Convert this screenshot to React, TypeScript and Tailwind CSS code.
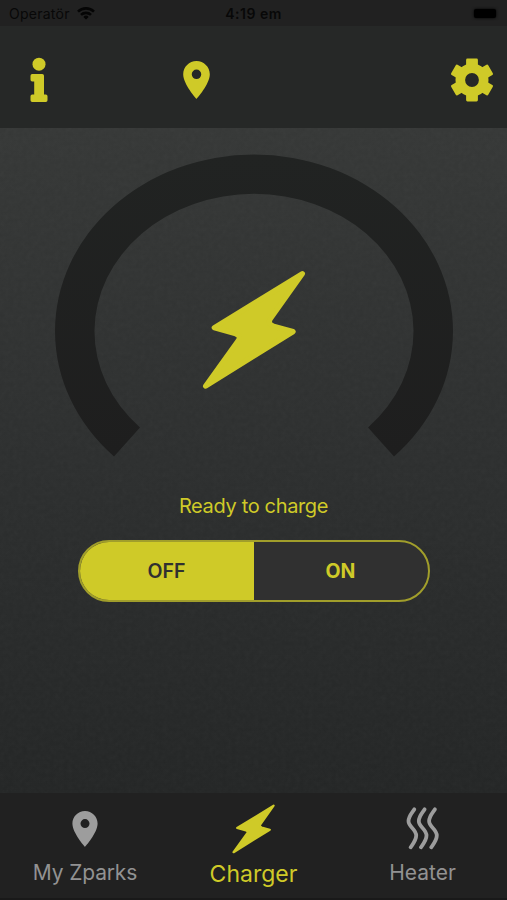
import React, { useState } from "react";

const Bolt: React.FC<{ className?: string }> = ({ className }) => (
  <svg viewBox="0 0 390 420" className={className} fill="currentColor">
    <path
      d="M337 41 L73 203 L137 221 Q154 228 145 242 L47 378 L309 215 L251 199 Q233 192 240 178 Z"
      stroke="currentColor"
      strokeWidth="16"
      strokeLinejoin="round"
    />
  </svg>
);

const Pin: React.FC<{ className?: string }> = ({ className }) => (
  <svg viewBox="5 2 14 20" className={className} fill="currentColor">
    <path d="M12 2C8.13 2 5 5.13 5 9c0 5.25 7 13 7 13s7-7.75 7-13c0-3.87-3.13-7-7-7zm0 9.5a2.5 2.5 0 1 1 0-5 2.5 2.5 0 0 1 0 5z" />
  </svg>
);

const Info = () => (
  <svg viewBox="0 0 18 46" className="h-[46px] w-[18px]" fill="currentColor">
    <circle cx="9" cy="7.2" r="6.5" />
    <path d="M2 17H12.200Q14 17 14 18.800V37.500H15.800Q17.500 37.500 17.500 39.200V43.300Q17.500 45 15.800 45H2.200Q.5 45 .5 43.300V39.200Q.5 37.500 2.200 37.500H4.200V24.500H2.200Q.5 24.500 .5 22.800V18.700Q.5 17 2.200 17z" />
  </svg>
);

const Wifi = () => (
  <svg viewBox="0 0 18 13" className="h-[13px] w-[18px]" fill="none" stroke="#050505" strokeWidth="2.6">
    <path d="M1 4.600a11.500 11.500 0 0 1 16 0" />
    <path d="M4 7.900a7.200 7.200 0 0 1 10 0" />
    <path d="M9 12.600 6.300 9.900a3.900 3.900 0 0 1 5.400 0z" fill="#050505" stroke="none" />
  </svg>
);

// One tooth on the hub, repeated six times
const Gear = () => (
  <svg viewBox="-22 -22 44 44" className="h-11 w-11" fill="currentColor">
    <path
      fillRule="evenodd"
      d="M0-16.500a16.500 16.500 0 1 0 0 33a16.500 16.500 0 1 0 0-33zM0-6.900a6.900 6.900 0 1 1 0 13.800a6.900 6.900 0 1 1 0-13.800z"
    />
    {[0, 60, 120, 180, 240, 300].map((angle) => (
      <rect key={angle} x="-5.9" y="-21.4" width="11.8" height="11" rx="1.3" transform={`rotate(${angle})`} />
    ))}
  </svg>
);

const Heat = () => (
  <svg viewBox="0 0 34 44" className="h-11 w-[34px]" fill="none" stroke="currentColor" strokeWidth="3.8" strokeLinecap="round">
    {[0, 10.3, 20.6].map((x) => (
      <path key={x} transform={`translate(${x} 0)`} d="M8.300 3.300C5 8 2.500 10.500 2.500 15C2.500 21 10.200 23 10.200 29.500C10.200 34 8 36.500 4.600 41.300" />
    ))}
  </svg>
);

const Gauge = () => (
  <svg viewBox="0 0 400 304" className="h-[304px] w-[400px]">
    <defs>
      <linearGradient id="ring" x1="0" y1="0" x2="0" y2="1">
        <stop offset="0" stopColor="#212322" />
        <stop offset="1" stopColor="#1e1e1e" />
      </linearGradient>
    </defs>
    <path
      d="M60 302.500 A199 176.500 0 1 1 340 302.500 L314 273.500 A159.500 137.500 0 1 0 86 273.500 Z"
      fill="url(#ring)"
    />
  </svg>
);

const Grain = () => (
  <svg className="pointer-events-none absolute inset-0 h-full w-full opacity-[0.03]">
    <filter id="grain">
      <feTurbulence type="fractalNoise" baseFrequency="0.22" numOctaves="3" />
      <feColorMatrix type="saturate" values="0" />
    </filter>
    <rect width="100%" height="100%" filter="url(#grain)" />
  </svg>
);

const App: React.FC = () => {
  const [charging, setCharging] = useState(false);

  return (
    <div className="flex h-[900px] w-[507px] flex-col overflow-hidden bg-[#212121] font-['Inter',sans-serif] text-[#cfca28]">
      <div className="grid h-[26px] shrink-0 grid-cols-3 items-center px-[9px] text-[14px] text-[#080808]">
        <div className="flex items-center gap-[7px]">
          <span className="tracking-[0.25px]">Operatör</span>
          <Wifi />
        </div>
        <span className="text-center font-semibold tracking-[0.5px]">4:19 em</span>
        <div className="mr-[2px] h-[9px] w-[22px] justify-self-end rounded-[2px] bg-black shadow-[0_0_3px_#000]" />
      </div>

      <header className="flex h-[102px] shrink-0 items-center bg-[#262827]">
        <div className="ml-[29.500px] mt-[6px]">
          <Info />
        </div>
        <Pin className="ml-[135.500px] mt-[5px] h-[38px] w-[27px]" />
        <div className="ml-auto mr-[13.500px] mt-[6px]">
          <Gear />
        </div>
      </header>

      <main className="relative flex h-[665px] shrink-0 flex-col items-center bg-linear-to-b from-[#363837] via-[#2d2f2f] to-[#242626]">
        <Grain />
        <div className="relative mt-[26px] grid place-items-center">
          <div className="col-start-1 row-start-1">
            <Gauge />
          </div>
          <Bolt className="col-start-1 row-start-1 mb-[-48px] h-[140px] w-[130px] translate-x-px" />
        </div>
        <p className="relative mt-[35px] text-[20px] leading-[26px] tracking-[-0.35px]">Ready to charge</p>
        <div className="relative mt-[21px] grid h-[62px] w-[352px] grid-cols-2 overflow-hidden rounded-full border-2 border-[#a19e2b] bg-[#303030] text-[19.5px] font-semibold">
          <button
            onClick={() => setCharging(false)}
            className={charging ? "pt-px" : "bg-[#cfca28] pt-px text-[#303030]"}
          >
            OFF
          </button>
          <button
            onClick={() => setCharging(true)}
            className={charging ? "bg-[#cfca28] pt-px font-bold text-[#303030]" : "pt-px font-bold"}
          >
            ON
          </button>
        </div>
      </main>

      <nav className="grid h-[107px] shrink-0 grid-cols-3 border-b-2 border-[#191919] text-[#929292]">
        <div className="flex flex-col items-center">
          <Pin className="ml-px mt-[18px] h-[36px] w-[26px] text-[#9d9d9d]" />
          <span className="ml-px mt-[13px] text-[21px] leading-[26px] tracking-[-0.15px]">My Zparks</span>
        </div>
        <div className="flex flex-col items-center text-[#cfca28]">
          <Bolt className="mt-[7px] h-[58px] w-[54px]" />
          <span className="mt-[3px] text-[23px] leading-[26px]">Charger</span>
        </div>
        <div className="flex flex-col items-center">
          <div className="mt-[13px] text-[#9d9d9d]">
            <Heat />
          </div>
          <span className="mt-[10px] text-[21px] leading-[26px]">Heater</span>
        </div>
      </nav>
    </div>
  );
};

export default App;
